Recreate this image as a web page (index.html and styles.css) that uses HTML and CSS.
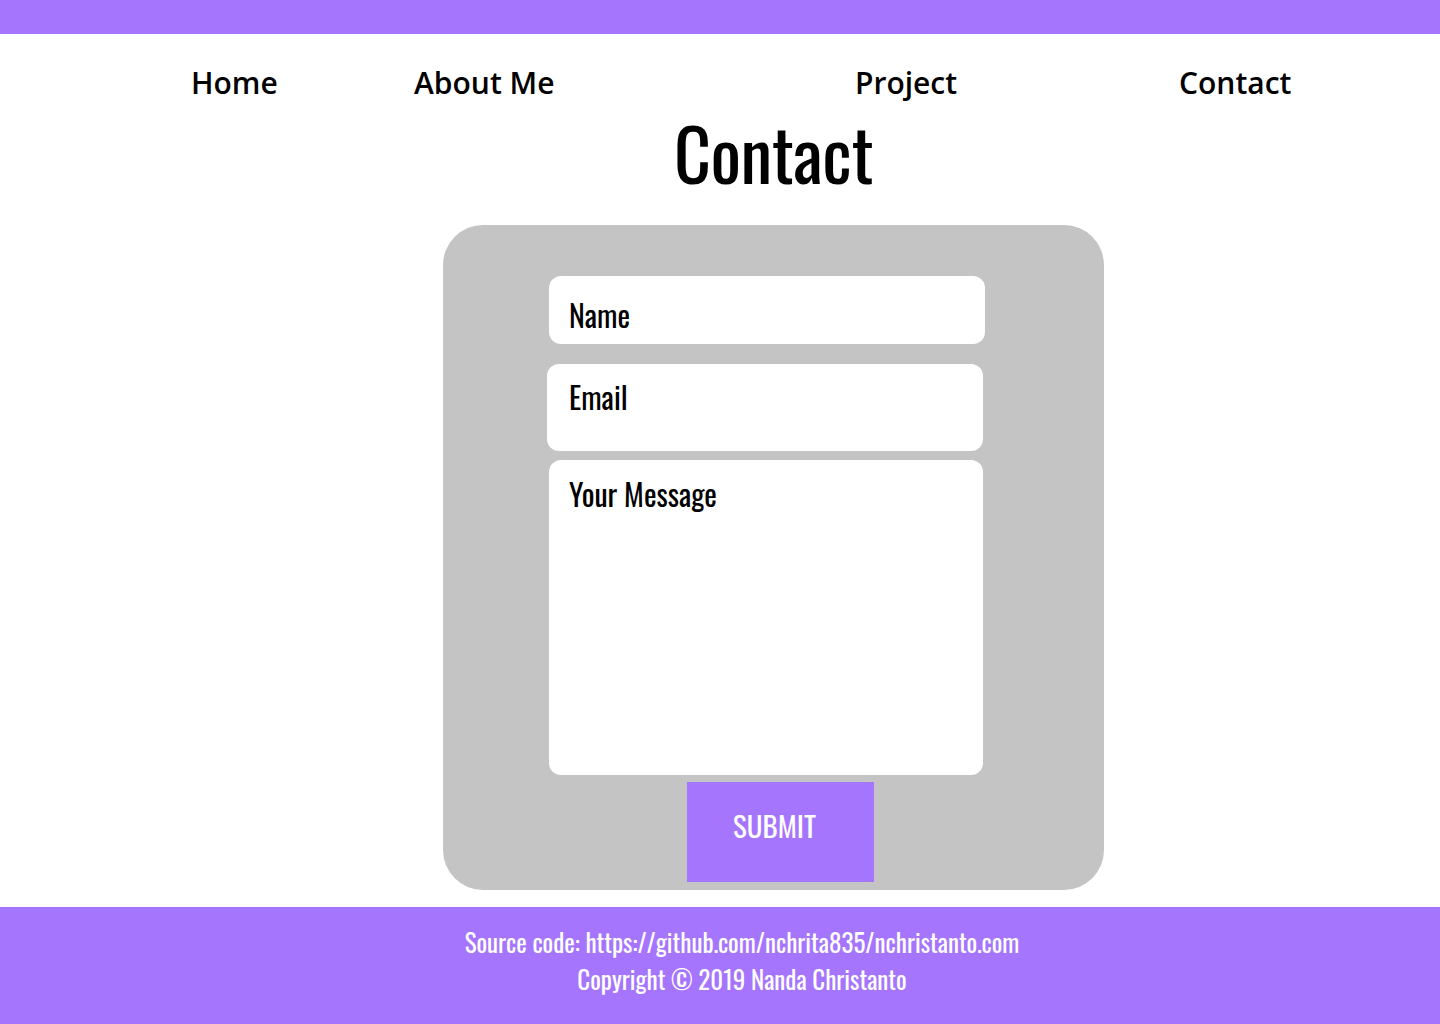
FILE: index.html
```html
<!DOCTYPE html>
<html>
<head>
<meta charset="utf-8">
<link rel="stylesheet" href="styles.css">
</head>
<body>
<div class="topbar"></div>
<nav class="nav">
  <a class="nav-link nav-home" href="#">Home</a>
  <a class="nav-link nav-about" href="#">About Me</a>
  <a class="nav-link nav-project" href="#">Project</a>
  <a class="nav-link nav-contact" href="#">Contact</a>
</nav>
<main class="main">
  <h1 class="title">Contact</h1>
  <form class="card">
    <div class="field field-name"><span class="ph">Name</span></div>
    <div class="field field-email"><span class="ph">Email</span></div>
    <div class="field field-msg"><span class="ph">Your Message</span></div>
    <button class="submit" type="button">SUBMIT</button>
  </form>
</main>
<footer class="footer">
  <p class="foot-line">Source code: https://github.com/nchrita835/nchristanto.com</p>
  <p class="foot-line">Copyright © 2019 Nanda Christanto</p>
</footer>
</body>
</html>
```
FILE: styles.css
```css
* { box-sizing: border-box; }
body { margin: 0; background: #fff; font-family: "Open Sans", sans-serif; }

.topbar { height: 34px; background: #a675fd; }

.nav { display: flex; height: 78px; padding: 28px 0 0 191px; }
.nav-link { display: block; font-size: 30px; font-weight: 600; line-height: 41px; color: #000; text-decoration: none; }
.nav-home { width: 223px; }
.nav-about { width: 441px; }
.nav-project { width: 324px; }

.main { padding-left: 107px; display: flex; flex-direction: column; align-items: center; }
.title { margin: 0; height: 80px; font-family: "Oswald", sans-serif; font-size: 72px; font-weight: 400; line-height: 80px; color: #000; letter-spacing: -0.5px; }

.card {
  margin-top: 33px;
  width: 661px;
  height: 665px;
  background: #c4c4c4;
  border-radius: 40px;
  padding: 51px 0 0 104px;
  display: flex;
  flex-direction: column;
  align-items: flex-start;
  font-family: "Oswald", sans-serif;
}
.field { background: #fff; border-radius: 12px; color: #000; padding-left: 20px; font-size: 30px; line-height: normal; }
.ph { display: block; white-space: nowrap; }
.field-name { width: 436px; height: 68px; margin-left: 2px; padding-top: 16px; }
.field-email { width: 436px; height: 87px; margin-top: 20px; padding-top: 10px; padding-left: 22px; }
.field-msg { width: 434px; height: 315px; margin-top: 9px; margin-left: 2px; padding-top: 11px; }

.submit {
  margin: 7px 0 0 140px;
  width: 187px;
  border: 0;
  border-radius: 0;
  background: #a675fd;
  color: #fff;
  font-family: "Oswald", sans-serif;
  font-size: 29px;
  font-weight: 400;
  line-height: 42px;
  padding: 22px 0 36px 46px;
  text-align: left;
  display: block;
}

.footer { margin-top: 17px; height: 117px; background: #a675fd; color: #fff; padding: 16px 0 0 44px; text-align: center; font-family: "Oswald", sans-serif; font-size: 25px; }
.foot-line { margin: 0; line-height: 37px; }
```
